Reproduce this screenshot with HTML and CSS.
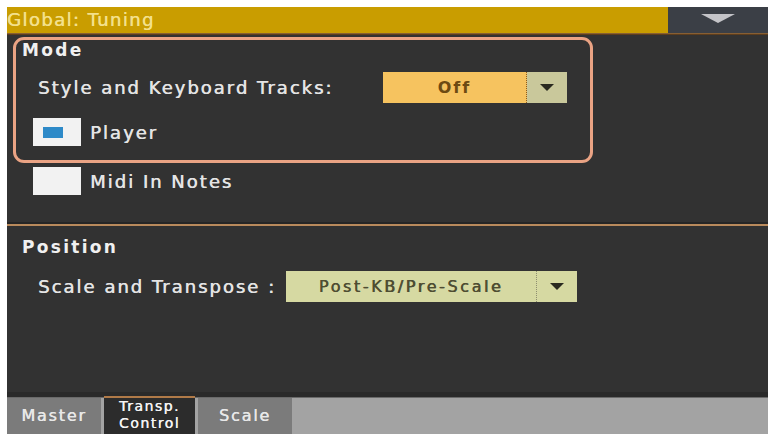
FILE: index.html
```html
<!DOCTYPE html>
<html>
<head>
<meta charset="utf-8">
<link rel="stylesheet" href="styles.css">
</head>
<body>
<div class="screen">
  <div class="header">
    <div class="title">Global: Tuning</div>
    <div class="menu"><svg width="34" height="10" viewBox="0 0 34 10"><polygon points="0,0 34,0 17,9" fill="#c4c4c8"/></svg></div>
  </div>
  <div class="header-line"></div>
  <div class="content">
    <div class="upper">
      <div class="mode-box">
        <div class="section-title">Mode</div>
        <div class="row row-tracks">
          <span class="label">Style and Keyboard Tracks:</span>
          <div class="dropdown dd-off">
            <div class="dd-value">Off</div>
            <div class="dd-arrow"><svg width="14" height="8" viewBox="0 0 14 8"><polygon points="0,0 14,0 7,7" fill="#2a2a20"/></svg></div>
          </div>
        </div>
        <div class="check-row row-player">
          <div class="checkbox"><div class="check-mark"></div></div>
          <span class="label">Player</span>
        </div>
      </div>
      <div class="check-row row-midi">
        <div class="checkbox"></div>
        <span class="label">Midi In Notes</span>
      </div>
    </div>
    <div class="divider"></div>
    <div class="lower">
      <div class="section-title">Position</div>
      <div class="row row-scale">
        <span class="label">Scale and Transpose :</span>
        <div class="dropdown dd-pos">
          <div class="dd-value">Post-KB/Pre-Scale</div>
          <div class="dd-arrow"><svg width="14" height="8" viewBox="0 0 14 8"><polygon points="0,0 14,0 7,7" fill="#2a2a20"/></svg></div>
        </div>
      </div>
    </div>
  </div>
  <div class="tabs">
    <div class="tab">Master</div>
    <div class="tab active"><span class="tab-line">Transp.</span><span class="tab-line">Control</span></div>
    <div class="tab">Scale</div>
  </div>
</div>
</body>
</html>
```
FILE: styles.css
```css
html, body {
  margin: 0;
  padding: 0;
  background: #ffffff;
}
body {
  width: 768px;
  height: 434px;
  overflow: hidden;
  font-family: "DejaVu Sans", "Liberation Sans", sans-serif;
}
.screen {
  margin: 7px 0 0 7px;
  width: 761px;
  height: 427px;
  display: flex;
  flex-direction: column;
  background: #323232;
}
.header {
  height: 26px;
  display: flex;
}
.title {
  flex: 1;
  background: #c99d00;
  color: #f3e08c;
  font-size: 18px;
  line-height: 26px;
  letter-spacing: 1.4px;
  text-shadow: 0.4px 0 0 #f3e08c;
}
.menu {
  width: 100px;
  background: #3b3f46;
  display: flex;
  justify-content: center;
  padding-top: 7px;
  box-sizing: border-box;
}
.header-line {
  height: 2px;
  background: linear-gradient(#9a7040, #4a2c10);
}
.content {
  flex: 1;
  display: flex;
  flex-direction: column;
  border-bottom: 5px solid #2a2a2a;
}
.upper {
  height: 189px;
  padding-top: 2px;
  box-sizing: border-box;
}
.mode-box {
  margin-left: 6px;
  width: 580px;
  height: 126px;
  border: 3px solid #eaa384;
  border-radius: 11px;
  box-sizing: border-box;
  padding: 2px 0 0 6px;
}
.section-title {
  color: #f0f0f0;
  font-weight: bold;
  font-size: 17px;
  line-height: 17px;
  letter-spacing: 2.3px;
}
.label {
  color: #e4e4e4;
  font-size: 18px;
  letter-spacing: 2px;
  white-space: nowrap;
  text-shadow: 0.5px 0 0 #e4e4e4;
}
.row {
  display: flex;
  align-items: center;
}
.row-tracks {
  margin-top: 13px;
  padding-left: 16px;
}
.row-tracks .label {
  width: 345px;
}
.dropdown {
  display: flex;
  height: 31px;
}
.dd-value {
  display: flex;
  align-items: center;
  justify-content: center;
  font-size: 16px;
  font-weight: bold;
  letter-spacing: 2px;
  white-space: nowrap;
}
.dd-arrow {
  display: flex;
  align-items: center;
  justify-content: center;
  width: 40px;
}
.dd-off .dd-value {
  width: 143px;
  background: #f6c35f;
  color: #6d4a12;
  border-right: 1px dotted #8a5a20;
}
.dd-off .dd-arrow {
  background: #c9c89b;
}
.dd-pos .dd-value {
  width: 250px;
  background: #d6d9a2;
  color: #4e4d32;
  border-right: 1px dotted #8e8e70;
  font-weight: normal;
  letter-spacing: 2.6px;
  text-shadow: 0.6px 0 0 #4e4d32;
}
.dd-pos .dd-arrow {
  background: #d6d9a2;
}
.check-row {
  display: flex;
  align-items: center;
}
.checkbox {
  width: 48px;
  height: 28px;
  background: #f2f2f2;
  display: flex;
  align-items: center;
  justify-content: center;
  margin-right: 9px;
}
.check-mark {
  width: 20px;
  height: 11px;
  background: #2e8ac8;
  margin-left: -8px;
}
.row-player {
  margin-top: 15px;
  margin-left: 11px;
}
.row-midi {
  margin-top: 4px;
  margin-left: 26px;
}
.divider {
  height: 2px;
  background: #b98a5c;
  box-shadow: 0 -2px 0 #262626;
}
.lower {
  padding: 13px 0 0 15px;
}
.row-scale {
  margin-top: 15px;
  padding-left: 16px;
}
.row-scale .label {
  width: 248px;
}
.tabs {
  height: 37px;
  background: #a3a3a3;
  border-top: 1px solid #6a6a6a;
  display: flex;
  box-sizing: border-box;
}
.tab {
  width: 94px;
  margin-right: 3px;
  background: #7b7b7b;
  color: #e8e8e8;
  font-size: 16px;
  letter-spacing: 1.8px;
  display: flex;
  flex-direction: column;
  align-items: center;
  justify-content: center;
  line-height: 16px;
  white-space: nowrap;
  text-shadow: 0.4px 0 0 #e8e8e8;
}
.tab.active {
  width: 91px;
  background: #2c2c2c;
  border-top: 2px solid #b07a48;
  color: #f5f5f5;
  margin-top: -2px;
  letter-spacing: 1.5px;
  padding-top: 0;
  box-sizing: border-box;
  justify-content: flex-start;
  font-size: 14px;
}
.tab-line {
  display: block;
  height: 17px;
  line-height: 17px;
}
```
